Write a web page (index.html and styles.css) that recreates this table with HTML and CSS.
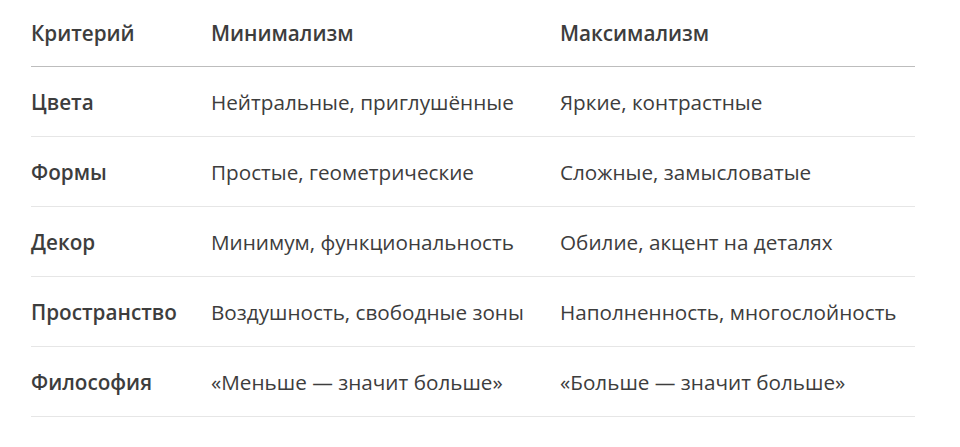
FILE: index.html
```html
<!DOCTYPE html>
<html lang="ru">
<head>
<meta charset="utf-8">
<link rel="stylesheet" href="styles.css">
</head>
<body>
<table class="cmp">
  <colgroup>
    <col class="c1"><col class="c2"><col class="c3">
  </colgroup>
  <thead>
    <tr><th>Критерий</th><th>Минимализм</th><th>Максимализм</th></tr>
  </thead>
  <tbody>
    <tr><td class="key">Цвета</td><td>Нейтральные, приглушённые</td><td>Яркие, контрастные</td></tr>
    <tr><td class="key">Формы</td><td>Простые, геометрические</td><td>Сложные, замысловатые</td></tr>
    <tr><td class="key">Декор</td><td>Минимум, функциональность</td><td>Обилие, акцент на деталях</td></tr>
    <tr><td class="key">Пространство</td><td>Воздушность, свободные зоны</td><td>Наполненность, многослойность</td></tr>
    <tr><td class="key">Философия</td><td>«Меньше — значит больше»</td><td>«Больше — значит больше»</td></tr>
  </tbody>
</table>
</body>
</html>
```
FILE: styles.css
```css
html, body {
  margin: 0;
  padding: 0;
  background: #ffffff;
}
body {
  font-family: "Open Sans", "Noto Sans", sans-serif;
  font-size: 20.7px;
  color: #3d3d3d;
}
.cmp {
  margin-left: 31px;
  border-collapse: collapse;
  width: 884px;
  table-layout: fixed;
}
.c1 { width: 180px; }
.c2 { width: 349px; }
.c3 { width: 355px; }
.cmp th, .cmp td {
  padding: 0;
  text-align: left;
  vertical-align: middle;
  white-space: nowrap;
}
.cmp th {
  height: 66px;
  font-weight: 600;
  border-bottom: 1px solid #bdbdbd;
}
.cmp td {
  height: 69px;
  font-weight: 400;
  border-bottom: 1px solid #e6e6e6;
}
.cmp td.key {
  font-weight: 600;
}
```
